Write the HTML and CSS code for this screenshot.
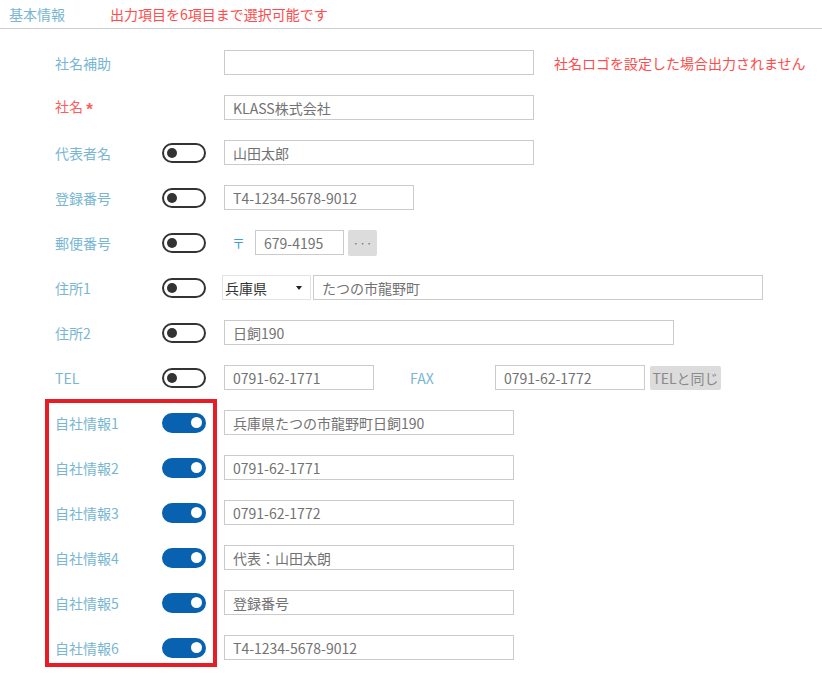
FILE: index.html
```html
<!DOCTYPE html>
<html lang="ja">
<head>
    <meta charset="UTF-8">
    <title>基本情報</title>
    <link rel="stylesheet" href="styles.css">
</head>
<body>
    <div class="panel">
        <!-- Header -->
        <div class="panel-header">
            <span class="panel-title">基本情報</span>
            <span class="panel-note">出力項目を6項目まで選択可能です</span>
        </div>

        <div class="form">
            <div class="row">
                <div class="label">社名補助</div>
                <div class="toggle-slot"></div>
                <input class="field w310" type="text" value="" readonly>
                <span class="row-note">社名ロゴを設定した場合出力されません</span>
            </div>
            <div class="row">
                <div class="label required">社名 <span class="star">*</span></div>
                <div class="toggle-slot"></div>
                <input class="field w310" type="text" value="KLASS株式会社" readonly>
            </div>
            <div class="row">
                <div class="label">代表者名</div>
                <div class="toggle-slot"><span class="toggle"><span class="knob"></span></span></div>
                <input class="field w310" type="text" value="山田太郎" readonly>
            </div>
            <div class="row">
                <div class="label">登録番号</div>
                <div class="toggle-slot"><span class="toggle"><span class="knob"></span></span></div>
                <input class="field w190" type="text" value="T4-1234-5678-9012" readonly>
            </div>
            <div class="row">
                <div class="label">郵便番号</div>
                <div class="toggle-slot"><span class="toggle"><span class="knob"></span></span></div>
                <span class="postal-mark">〒</span>
                <input class="field w89" type="text" value="679-4195" readonly>
                <button class="btn-more" type="button">···</button>
            </div>
            <div class="row">
                <div class="label">住所1</div>
                <div class="toggle-slot"><span class="toggle"><span class="knob"></span></span></div>
                <div class="select">兵庫県<span class="caret"></span></div>
                <input class="field w450" type="text" value="たつの市龍野町" readonly>
            </div>
            <div class="row">
                <div class="label">住所2</div>
                <div class="toggle-slot"><span class="toggle"><span class="knob"></span></span></div>
                <input class="field w450" type="text" value="日飼190" readonly>
            </div>
            <div class="row">
                <div class="label">TEL</div>
                <div class="toggle-slot"><span class="toggle"><span class="knob"></span></span></div>
                <input class="field w150" type="text" value="0791-62-1771" readonly>
                <div class="label fax-label">FAX</div>
                <input class="field w150" type="text" value="0791-62-1772" readonly>
                <button class="btn-same" type="button">TELと同じ</button>
            </div>

            <!-- Company info (highlighted) -->
            <div class="highlight-group">
                <div class="row">
                    <div class="label">自社情報1</div>
                    <div class="toggle-slot"><span class="toggle on"><span class="knob"></span></span></div>
                    <input class="field w290" type="text" value="兵庫県たつの市龍野町日飼190" readonly>
                </div>
                <div class="row">
                    <div class="label">自社情報2</div>
                    <div class="toggle-slot"><span class="toggle on"><span class="knob"></span></span></div>
                    <input class="field w290" type="text" value="0791-62-1771" readonly>
                </div>
                <div class="row">
                    <div class="label">自社情報3</div>
                    <div class="toggle-slot"><span class="toggle on"><span class="knob"></span></span></div>
                    <input class="field w290" type="text" value="0791-62-1772" readonly>
                </div>
                <div class="row">
                    <div class="label">自社情報4</div>
                    <div class="toggle-slot"><span class="toggle on"><span class="knob"></span></span></div>
                    <input class="field w290" type="text" value="代表：山田太朗" readonly>
                </div>
                <div class="row">
                    <div class="label">自社情報5</div>
                    <div class="toggle-slot"><span class="toggle on"><span class="knob"></span></span></div>
                    <input class="field w290" type="text" value="登録番号" readonly>
                </div>
                <div class="row">
                    <div class="label">自社情報6</div>
                    <div class="toggle-slot"><span class="toggle on"><span class="knob"></span></span></div>
                    <input class="field w290" type="text" value="T4-1234-5678-9012" readonly>
                </div>
                <div class="highlight-box"></div>
            </div>
        </div>
    </div>
</body>
</html>
```

FILE: styles.css
```css
* {
    margin: 0;
    padding: 0;
    box-sizing: border-box;
}

body {
    background: #fff;
    color: #333;
    font-family: "Noto Sans CJK JP", "Noto Sans", sans-serif;
    font-size: 14px;
}

/* Header */
.panel-header {
    display: flex;
    align-items: center;
    height: 29px;
    padding-left: 9px;
    border-bottom: 1px solid #cfcfcf;
}

.panel-title {
    color: #78b6d3;
    margin-right: 45px;
}

.panel-note {
    color: #ff4b4b;
}

/* Form */
.form {
    padding-top: 11px;
}

.row {
    display: flex;
    align-items: center;
    height: 45px;
}

.row > * {
    flex-shrink: 0;
}

.label {
    width: 162px;
    padding-left: 55px;
    color: #78b6d3;
    white-space: nowrap;
}

.label.required {
    color: #ff5c5c;
}

.star {
    font-family: "Liberation Sans", sans-serif;
    font-weight: bold;
    font-size: 17px;
    vertical-align: -3px;
}

.toggle-slot {
    width: 44px;
    margin-right: 18px;
    display: flex;
    align-items: center;
}

/* Toggle */
.toggle {
    display: flex;
    align-items: center;
    width: 44px;
    height: 20px;
    padding: 0 3px;
    border: 2px solid #333;
    border-radius: 10px;
}

.toggle .knob {
    width: 10px;
    height: 10px;
    border-radius: 50%;
    background: #333;
}

.toggle.on {
    justify-content: flex-end;
    background: #0862b0;
    border-color: #0862b0;
    padding: 0 2px;
}

.toggle.on .knob {
    background: #fff;
    width: 11px;
    height: 11px;
}

/* Fields */
.field {
    height: 25px;
    border: 1px solid #cbcbcb;
    padding: 0 8px;
    font: inherit;
    color: #727272;
    background: #fff;
    outline: none;
}

.w89 { width: 89px; }
.w150 { width: 150px; }
.w190 { width: 190px; }
.w290 { width: 290px; }
.w310 { width: 310px; }
.w450 { width: 450px; }

.row-note {
    margin-left: 20px;
    color: #ff4b4b;
}

.postal-mark {
    color: #3d9fd3;
    margin: 0 10px 0 8px;
    font-size: 13px;
}

.btn-more {
    width: 29px;
    height: 26px;
    margin-left: 4px;
    border: none;
    border-radius: 2px;
    background: #dcdcdc;
    color: #777;
    font: inherit;
    font-size: 12px;
}

.select {
    display: flex;
    align-items: center;
    justify-content: space-between;
    width: 89px;
    height: 25px;
    margin-left: -2px;
    margin-right: 2px;
    padding: 0 5px 0 2px;
    border: 1px solid #e3e3e3;
    color: #333;
}

.caret {
    width: 0;
    height: 0;
    border-left: 3px solid transparent;
    border-right: 3px solid transparent;
    border-top: 4px solid #222;
    margin-right: 3px;
}

.fax-label {
    width: 121px;
    padding-left: 36px;
}

.btn-same {
    height: 24px;
    width: 71px;
    margin-left: 5px;
    border: none;
    border-radius: 2px;
    background: #dcdcdc;
    color: #8a8a8a;
    font: inherit;
}

/* Highlight annotation */
.highlight-group {
    position: relative;
}

.highlight-box {
    position: absolute;
    left: 45px;
    top: -1px;
    width: 172px;
    height: 268px;
    border: 4px solid #e81c24;
}
```
